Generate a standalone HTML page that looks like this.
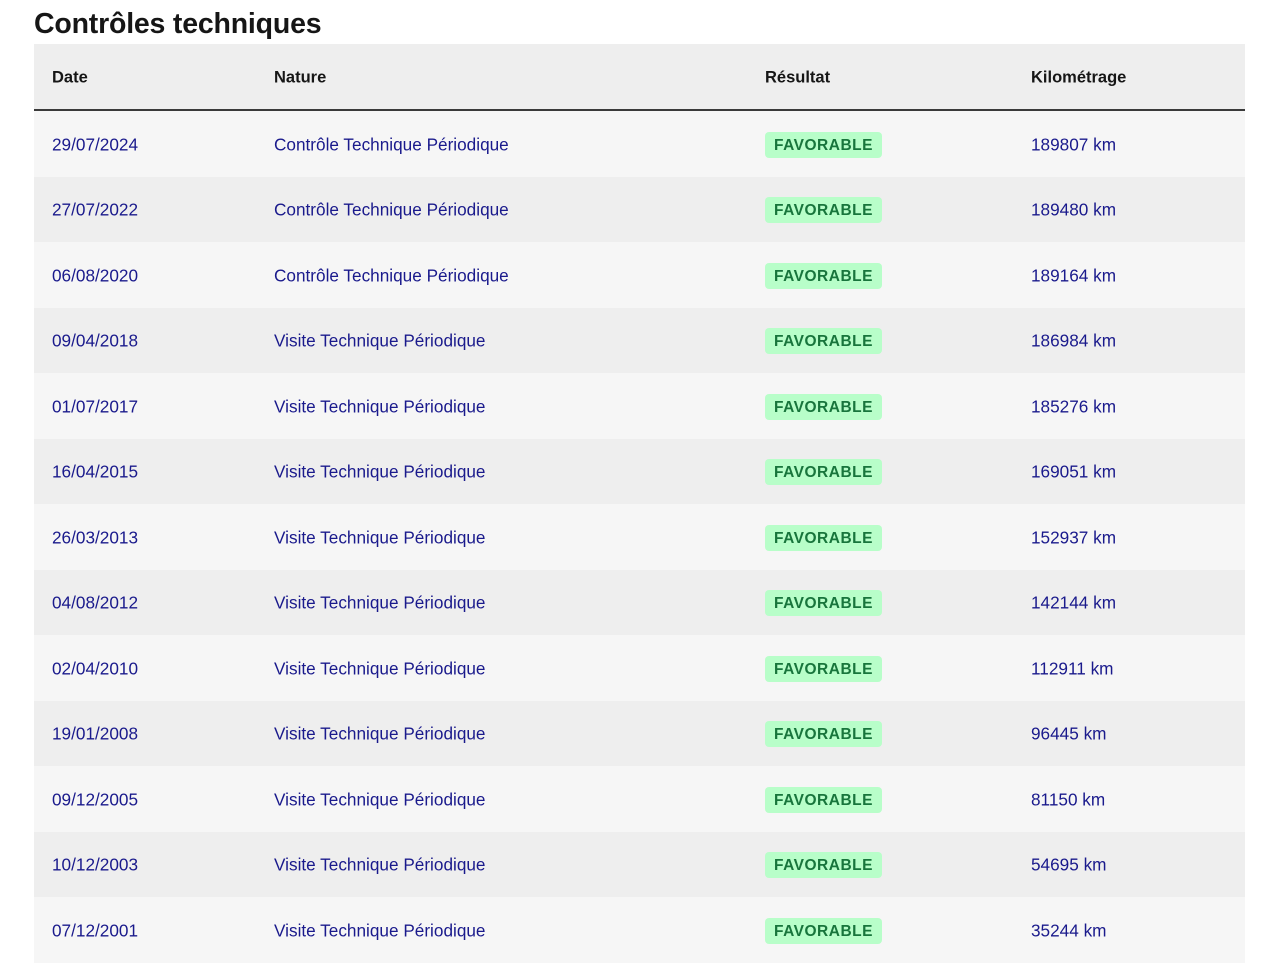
<!DOCTYPE html>
<html><head><meta charset="utf-8"><style>
body{margin:0;background:#fff;font-family:"Liberation Sans",sans-serif;width:1280px;height:960px;overflow:hidden;position:relative}
h1{position:absolute;left:34px;top:8px;margin:0;font-size:28.5px;font-weight:bold;color:#161616;letter-spacing:-0.2px}
.t{position:absolute;left:34px;top:44px;width:1211px}
.h{height:65px;background:#eeeeee;border-bottom:2px solid #3a3a3a;position:relative;font-weight:bold;font-size:16.5px;color:#161616}
.r{height:65.5px;position:relative;font-size:17.2px;color:#1a1a8c}
.r:nth-child(odd){background:#f6f6f6}
.r:nth-child(even){background:#eeeeee}
.c{position:absolute;top:calc(50% + 1px);transform:translateY(-50%);white-space:nowrap}
.a{left:18px}.b{left:240px}.d{left:731px}.e{left:997px}
.bd{background:#b8fec9;color:#18753c;font-weight:bold;font-size:15.5px;height:26px;line-height:27px;padding:0 9px;border-radius:4px;letter-spacing:0.5px}
</style></head><body>
<h1>Contrôles techniques</h1>
<div class="t">
<div class="h"><span class="c a">Date</span><span class="c b">Nature</span><span class="c d">Résultat</span><span class="c e">Kilométrage</span></div>
<div>
<div class="r"><span class="c a">29/07/2024</span><span class="c b">Contrôle Technique Périodique</span><span class="c d bd">FAVORABLE</span><span class="c e">189807 km</span></div>
<div class="r"><span class="c a">27/07/2022</span><span class="c b">Contrôle Technique Périodique</span><span class="c d bd">FAVORABLE</span><span class="c e">189480 km</span></div>
<div class="r"><span class="c a">06/08/2020</span><span class="c b">Contrôle Technique Périodique</span><span class="c d bd">FAVORABLE</span><span class="c e">189164 km</span></div>
<div class="r"><span class="c a">09/04/2018</span><span class="c b">Visite Technique Périodique</span><span class="c d bd">FAVORABLE</span><span class="c e">186984 km</span></div>
<div class="r"><span class="c a">01/07/2017</span><span class="c b">Visite Technique Périodique</span><span class="c d bd">FAVORABLE</span><span class="c e">185276 km</span></div>
<div class="r"><span class="c a">16/04/2015</span><span class="c b">Visite Technique Périodique</span><span class="c d bd">FAVORABLE</span><span class="c e">169051 km</span></div>
<div class="r"><span class="c a">26/03/2013</span><span class="c b">Visite Technique Périodique</span><span class="c d bd">FAVORABLE</span><span class="c e">152937 km</span></div>
<div class="r"><span class="c a">04/08/2012</span><span class="c b">Visite Technique Périodique</span><span class="c d bd">FAVORABLE</span><span class="c e">142144 km</span></div>
<div class="r"><span class="c a">02/04/2010</span><span class="c b">Visite Technique Périodique</span><span class="c d bd">FAVORABLE</span><span class="c e">112911 km</span></div>
<div class="r"><span class="c a">19/01/2008</span><span class="c b">Visite Technique Périodique</span><span class="c d bd">FAVORABLE</span><span class="c e">96445 km</span></div>
<div class="r"><span class="c a">09/12/2005</span><span class="c b">Visite Technique Périodique</span><span class="c d bd">FAVORABLE</span><span class="c e">81150 km</span></div>
<div class="r"><span class="c a">10/12/2003</span><span class="c b">Visite Technique Périodique</span><span class="c d bd">FAVORABLE</span><span class="c e">54695 km</span></div>
<div class="r"><span class="c a">07/12/2001</span><span class="c b">Visite Technique Périodique</span><span class="c d bd">FAVORABLE</span><span class="c e">35244 km</span></div>
</div>
</div>
</body></html>
